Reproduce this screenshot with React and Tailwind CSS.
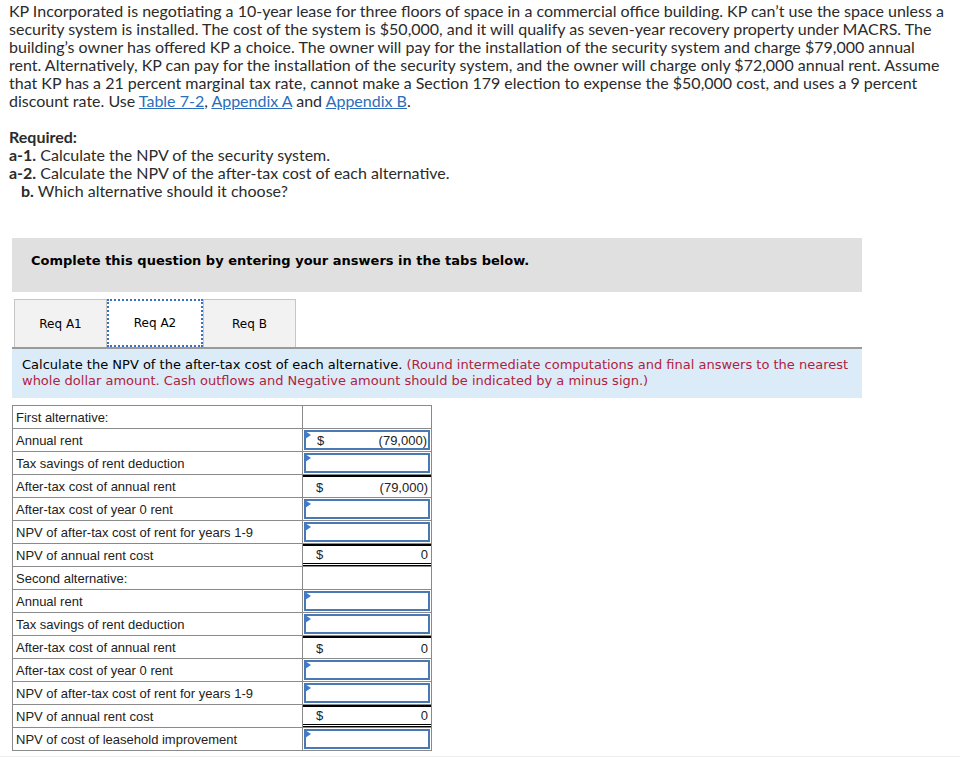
import React from 'react';

const rows = [
  { label: 'First alternative:', kind: 'plain' },
  { label: 'Annual rent', kind: 'input', dollar: true, value: '(79,000)' },
  { label: 'Tax savings of rent deduction', kind: 'input' },
  { label: 'After-tax cost of annual rent', kind: 'total', value: '(79,000)' },
  { label: 'After-tax cost of year 0 rent', kind: 'input' },
  { label: 'NPV of after-tax cost of rent for years 1-9', kind: 'input' },
  { label: 'NPV of annual rent cost', kind: 'grand', value: '0' },
  { label: 'Second alternative:', kind: 'plain' },
  { label: 'Annual rent', kind: 'input' },
  { label: 'Tax savings of rent deduction', kind: 'input' },
  { label: 'After-tax cost of annual rent', kind: 'total', value: '0' },
  { label: 'After-tax cost of year 0 rent', kind: 'input' },
  { label: 'NPV of after-tax cost of rent for years 1-9', kind: 'input' },
  { label: 'NPV of annual rent cost', kind: 'grand', value: '0' },
  { label: 'NPV of cost of leasehold improvement', kind: 'input' },
];

function Flag() {
  return (
    <span className="absolute -left-px -top-px w-0 h-0 border-t-[4px] border-b-[4px] border-l-[6px] border-t-transparent border-b-transparent border-l-[#3d7bd0]" />
  );
}

function ValueCell({ row }) {
  if (row.kind === 'plain') return <div className="h-[22px]" />;
  if (row.kind === 'input') {
    return (
      <div className="h-[22px] box-border p-px">
        <div className="relative h-full box-border border-2 border-[#4a78b5] flex items-center pl-[11px] pr-[1px]">
          <Flag />
          {row.dollar && <span>$</span>}
          <span className="ml-auto">{row.value}</span>
        </div>
      </div>
    );
  }
  return (
    <div
      className={`h-[22px] box-border flex items-center pl-[13px] pr-[3px] border-t-2 border-black ${
        row.kind === 'grand' ? 'border-b-[3px] border-double' : ''
      }`}
    >
      <span>$</span>
      <span className="ml-auto">{row.value}</span>
    </div>
  );
}

export default function App() {
  return (
    <div className="bg-white w-[960px] h-[761px] overflow-hidden relative">
      <div className="pl-[9px] pt-[2px] text-[16px] leading-[18px] text-[#2b2b2b] font-['Lato','Open_Sans',sans-serif]">
        <p>
          KP Incorporated is negotiating a 10-year lease for three floors of space in a commercial office building. KP can’t use the space unless a<br />
          security system is installed. The cost of the system is $50,000, and it will qualify as seven-year recovery property under MACRS. The<br />
          building’s owner has offered KP a choice. The owner will pay for the installation of the security system and charge $79,000 annual<br />
          rent. Alternatively, KP can pay for the installation of the security system, and the owner will charge only $72,000 annual rent. Assume<br />
          that KP has a 21 percent marginal tax rate, cannot make a Section 179 election to expense the $50,000 cost, and uses a 9 percent<br />
          discount rate. Use <a className="text-[#2a6ebb] underline">Table 7-2</a>,{' '}
          <a className="text-[#2a6ebb] underline">Appendix A</a> and{' '}
          <a className="text-[#2a6ebb] underline">Appendix B</a>.
        </p>
        <div className="mt-[18px]">
          <p className="font-bold">Required:</p>
          <p><b>a-1.</b> Calculate the NPV of the security system.</p>
          <p><b>a-2.</b> Calculate the NPV of the after-tax cost of each alternative.</p>
          <p className="pl-[12px]"><b>b.</b> Which alternative should it choose?</p>
        </div>
      </div>

      <div className="ml-[12px] mt-[38px] w-[850px] h-[54px] bg-[#e0e0e0] flex items-center pl-[19px] pb-[8px] font-['DejaVu_Sans','Verdana',sans-serif] text-[13px] font-bold text-black">
        Complete this question by entering your answers in the tabs below.
      </div>

      <div className="ml-[12px] mt-[7px] w-[850px] font-['DejaVu_Sans','Verdana',sans-serif] text-[12px] text-black">
        <div className="flex h-[48px] pl-[2px]">
          <div className="w-[93px] bg-[#f2f2f2] border border-[#c6c6c6] border-b-0 flex items-center justify-center">Req A1</div>
          <div className="w-[96px] bg-white border-2 border-dotted border-[#3a6fbe] flex items-center justify-center">Req A2</div>
          <div className="w-[93px] bg-[#f2f2f2] border border-[#c6c6c6] border-b-0 flex items-center justify-center">Req B</div>
        </div>
        <div className="border-t-2 border-[#9a9a9a] bg-[#dcebf8] px-[10px] pt-[8px] pb-[9px] text-[13px] leading-[16px]">
          Calculate the NPV of the after-tax cost of each alternative.{' '}
          <span className="text-[#b0223f]">
            (Round intermediate computations and final answers to the nearest whole dollar amount. Cash outflows and Negative amount should be indicated by a minus sign.)
          </span>
        </div>
      </div>

      <table className="ml-[12px] mt-[7px] border-collapse font-['Liberation_Sans','Arial',sans-serif] text-[13px] leading-[15px] text-[#222]">
        <tbody>
          {rows.map((row, i) => (
            <tr key={i}>
              <td className="w-[290px] h-[22px] border border-[#8a8a8a] px-[3px] py-0 align-middle whitespace-nowrap">{row.label}</td>
              <td className="w-[129px] h-[22px] border border-[#8a8a8a] p-0 align-top">
                <ValueCell row={row} />
              </td>
            </tr>
          ))}
        </tbody>
      </table>

      <div className="absolute left-0 right-0 top-[756px] h-px bg-[#eeeeee]" />
    </div>
  );
}
